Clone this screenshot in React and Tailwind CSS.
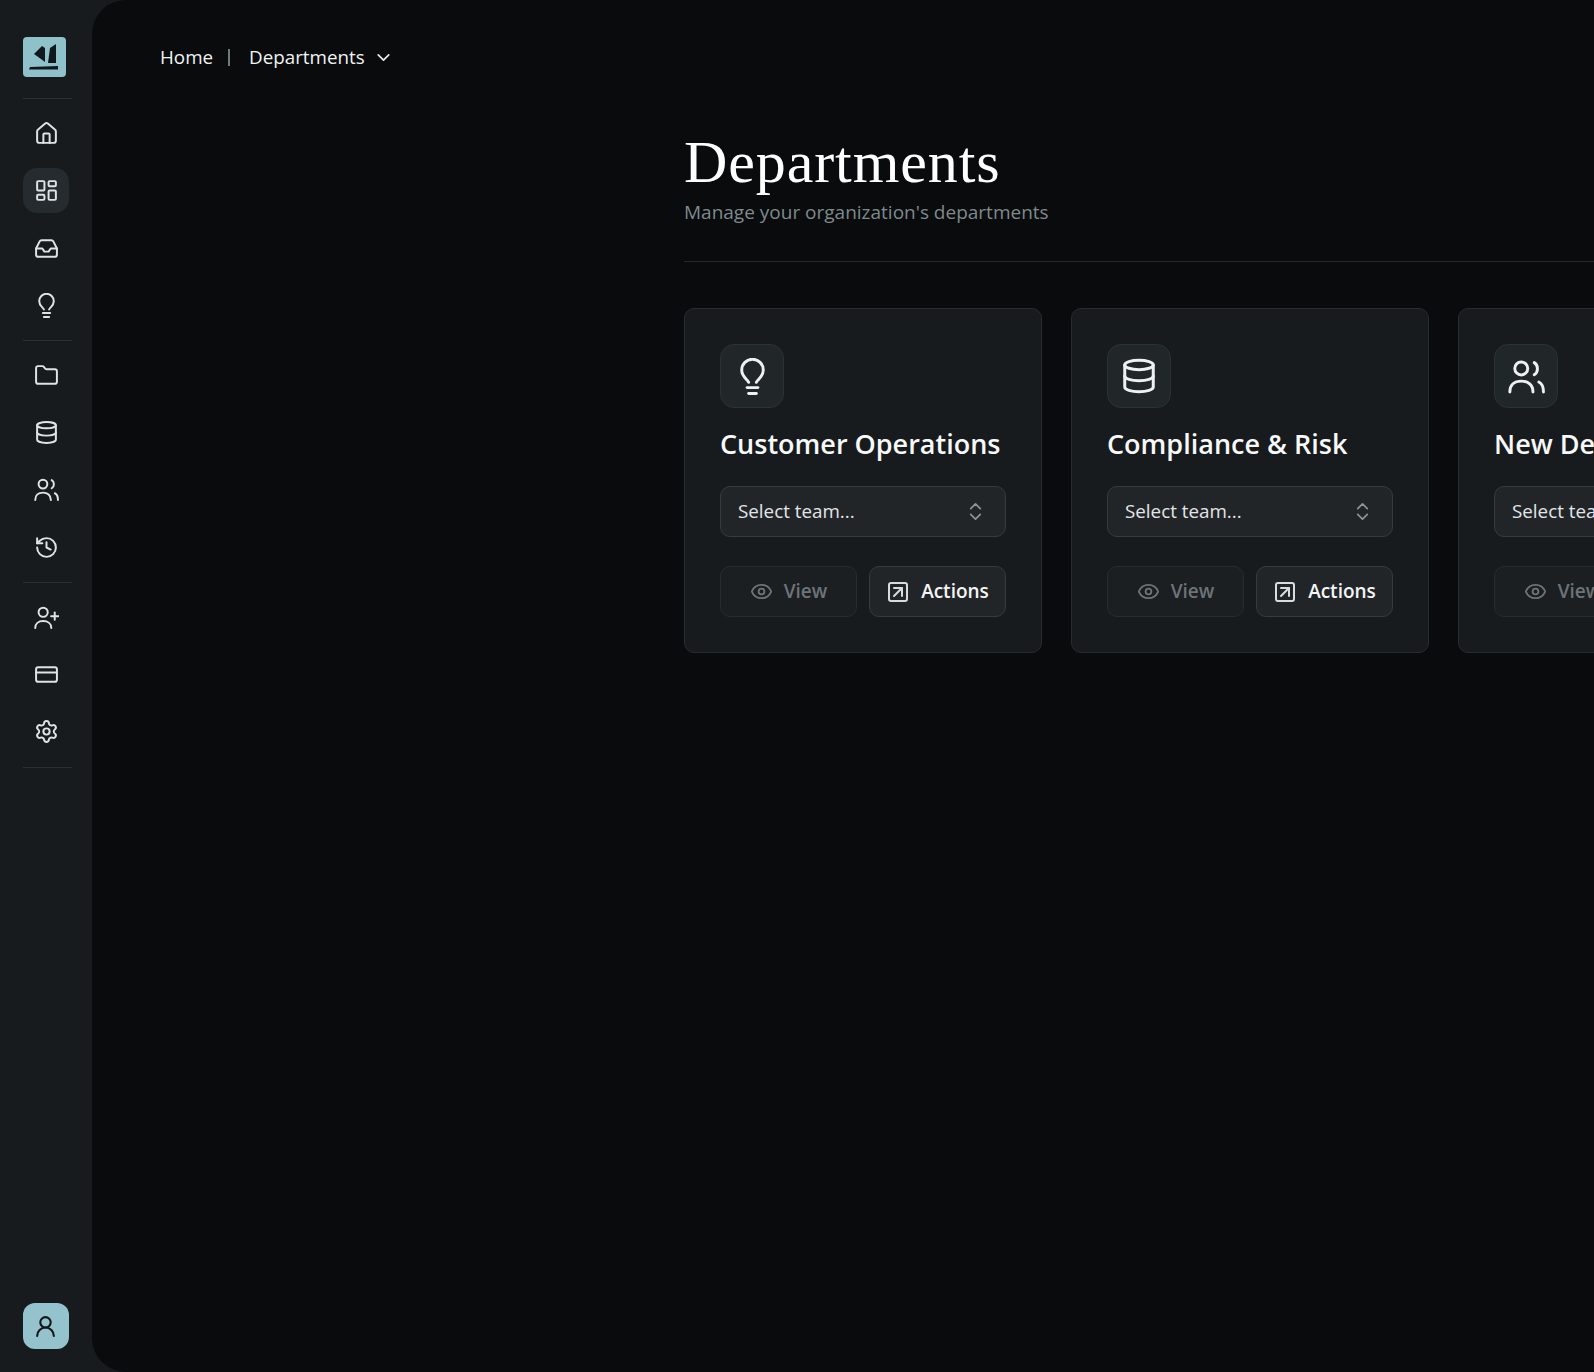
import React from "react";
import {
  House, LayoutDashboard, Inbox, Folder, Database, History,
  CreditCard, Settings, UserRound, ChevronDown, ChevronsUpDown, Eye, SquareArrowUpRight,
} from "lucide-react";

const sans = "font-['Open_Sans','Noto_Sans',sans-serif]";

function Base({ size = 25, strokeWidth = 1.9, className, children }) {
  return (
    <svg width={size} height={size} viewBox="0 0 24 24" fill="none" stroke="currentColor" strokeWidth={strokeWidth} strokeLinecap="round" strokeLinejoin="round" className={className}>
      {children}
    </svg>
  );
}

function Bulb(props) {
  return (
    <Base {...props}>
      <path d="M9.5 15.8C8.8 13.8 5 12.3 5 7.8a7 7 0 0 1 14 0c0 4.5-3.8 6-4.5 8" />
      <path d="M8.5 19.2h7" />
      <path d="M9.5 23h5" />
    </Base>
  );
}

function Users(props) {
  return (
    <Base {...props}>
      <circle cx="8.6" cy="6.8" r="4.2" />
      <path d="M17 3c1.4.8 2.1 2.2 2.1 3.9S18.4 10 17 10.8" />
      <path d="M1.2 22c0-4.5 3-7 7.4-7s7.6 2.5 7.6 7" />
      <path d="M20 15.6c2 1 3 3.4 3 6.4" />
    </Base>
  );
}

function UserPlus(props) {
  return (
    <Base {...props}>
      <circle cx="8.8" cy="7" r="4.4" />
      <path d="M1.2 22c0-4 3-6.6 7.6-6.6S16.6 18 16.6 22" />
      <path d="M16.4 10.7h7" />
      <path d="M19.9 7.2v7" />
    </Base>
  );
}

function NavIcon({ icon: Icon, active }) {
  return (
    <div className={`flex h-[45px] w-[46px] items-center justify-start rounded-[14px] pl-[11px] ${active ? "bg-[#252b2e]" : ""}`}>
      <Icon size={25} strokeWidth={1.9} className="text-[#dfe3e5]" />
    </div>
  );
}

function Divider() {
  return <div className="h-px w-[49px] bg-[#2b3033]" />;
}

function Logo() {
  return (
    <div className="flex h-[40px] w-[43px] items-center justify-center rounded-[4px] bg-[#8fc1ca]">
      <svg width="43" height="40" viewBox="0 0 43 40">
        <path d="M11 17 L19 9 L22 11 L22 25 L18 22 Z" fill="#11181c" />
        <path d="M27 11 L33 7 L33 26 L25 26 Z" fill="#11181c" />
        <path d="M7 30 L35 29 L35 32.5 L6 32.5 Z" fill="#11181c" />
      </svg>
    </div>
  );
}

function Card({ icon: Icon, title, size }) {
  return (
    <div className="h-[345px] w-[358px] shrink-0 rounded-[10px] border border-[#272c2f] bg-[#171b1e] p-[35px]">
      <div className="flex h-[64px] w-[64px] items-center justify-center rounded-[14px] border border-[#2b3134] bg-[#212629]">
        <Icon size={size} strokeWidth={1.9} className="text-[#eef0f1]" />
      </div>
      <h2 className="mt-[15px] whitespace-nowrap text-[27px] font-semibold leading-[42px] text-[#f7f8f8]">{title}</h2>
      <div className="mt-[21px] flex h-[51px] w-[286px] items-center justify-between rounded-[10px] border border-[#363b3e] bg-[#212528] pl-[17px] pr-[18px]">
        <span className="whitespace-nowrap text-[18.8px] text-[#e3e6e8]">Select team...</span>
        <ChevronsUpDown size={23} strokeWidth={1.8} className="text-[#8d9396]" />
      </div>
      <div className="mt-[29px] flex w-[286px] gap-[12px]">
        <button className="flex h-[51px] flex-1 items-center justify-center gap-[11px] rounded-[10px] border border-[#272c2f] bg-[#1b1f22] text-[19px] font-semibold text-[#6d7478]">
          <Eye size={23} strokeWidth={1.9} className="text-[#6d7478]" />
          View
        </button>
        <button className="flex h-[51px] flex-1 items-center justify-center gap-[11px] rounded-[10px] border border-[#363b3e] bg-[#212528] text-[19px] font-semibold text-[#f4f5f6]">
          <SquareArrowUpRight size={24} strokeWidth={2} className="text-[#d9dcde]" />
          Actions
        </button>
      </div>
    </div>
  );
}

export default function App() {
  return (
    <div className={`flex h-screen w-full overflow-hidden bg-[#171b1e] ${sans}`}>
      <aside className="flex w-[92px] shrink-0 flex-col pl-[22.5px] pt-[37px] pb-[23px]">
        <Logo />
        <div className="mt-[21px]"><Divider /></div>
        <div className="mt-[12px] flex flex-col gap-[12.3px]">
          <NavIcon icon={House} />
          <NavIcon icon={LayoutDashboard} active />
          <NavIcon icon={Inbox} />
          <NavIcon icon={Bulb} />
        </div>
        <div className="my-[12px]"><Divider /></div>
        <div className="flex flex-col gap-[12.3px]">
          <NavIcon icon={Folder} />
          <NavIcon icon={Database} />
          <NavIcon icon={Users} />
          <NavIcon icon={History} />
        </div>
        <div className="my-[12px]"><Divider /></div>
        <div className="flex flex-col gap-[12.3px]">
          <NavIcon icon={UserPlus} />
          <NavIcon icon={CreditCard} />
          <NavIcon icon={Settings} />
        </div>
        <div className="mt-[13px]"><Divider /></div>
        <div className="mt-auto flex h-[46px] w-[46px] items-center justify-center rounded-[12px] bg-[#95c3cd]">
          <UserRound size={25} strokeWidth={2} className="text-[#10171b]" />
        </div>
      </aside>
      <main className="min-w-0 flex-1 overflow-hidden rounded-l-[34px] bg-[#090b0d]">
        <nav className="flex items-center pl-[68px] pt-[43px] text-[18.8px] leading-[28px] text-[#f1f3f4]">
          <span>Home</span>
          <span className="ml-[15px] mr-[19px] h-[17px] w-[2px] bg-[#6f7c76]" />
          <span>Departments</span>
          <ChevronDown size={21} strokeWidth={2} className="ml-[8px] text-[#e7e9ea]" />
        </nav>
        <div className="ml-[592px] mt-[56px] w-[1100px]">
          <h1 className="font-['Liberation_Serif',serif] text-[60px] font-normal leading-[70px] tracking-[0.9px] text-white">Departments</h1>
          <p className="mt-[1px] text-[19px] leading-[28px] text-[#7f8a8c]">Manage your organization's departments</p>
          <div className="mt-[35px] h-px bg-[#25292c]" />
          <div className="mt-[46px] flex gap-[29px]">
            <Card icon={Bulb} title="Customer Operations" size={37} />
            <Card icon={Database} title="Compliance & Risk" size={38} />
            <Card icon={Users} title="New Department" size={37} />
          </div>
        </div>
      </main>
    </div>
  );
}
